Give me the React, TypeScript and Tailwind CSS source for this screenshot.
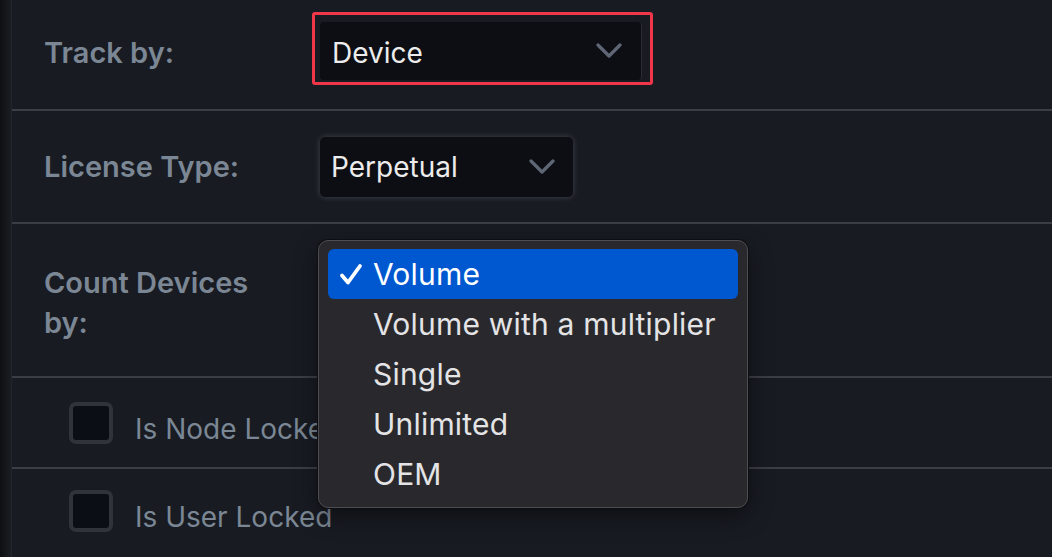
function Chevron() {
  return (
    <svg width="26" height="16" viewBox="0 0 26 16" fill="none">
      <path d="M2 2 L13 13 L24 2" stroke="#5f6776" strokeWidth="3.2" strokeLinecap="round" strokeLinejoin="round" />
    </svg>
  );
}

function Checkbox() {
  return <div className="w-[44px] h-[42px] rounded-[7px] border-[4px] border-[#30333a] bg-[#0c0e15] shrink-0" />;
}

const options = ["Volume", "Volume with a multiplier", "Single", "Unlimited", "OEM"];

export default function App() {
  return (
    <div
      className="relative w-[1052px] h-[557px] overflow-hidden flex bg-[#181b22]"
      style={{ fontFamily: "Inter, 'Liberation Sans', sans-serif" }}
    >
      <div className="w-[12px] bg-gradient-to-r from-[#0d0f12] to-[#1b1e23] border-r border-[#23262c]" />
      <div className="flex-1 flex flex-col">
        {/* Track by */}
        <div className="h-[111px] flex border-b-2 border-[#3b3e45]">
          <div className="w-[300px] pl-[32px] pb-[4px] flex items-center text-[29px] font-semibold text-[#7b8794]">Track by:</div>
          <div className="mt-[12px] self-start border-[3px] border-[#f0374a] rounded-[3px] pl-[5px] pr-[8px] pt-[7px] pb-[2px]">
            <div className="w-[322px] h-[58px] rounded-[4px] bg-[#0c0e14] border-r border-[#2a2c31] flex items-center justify-between pl-[12px] pr-[19px]">
              <span className="text-[28px] text-[#ececec] pt-[3px]">Device</span>
              <Chevron />
            </div>
          </div>
        </div>

        {/* License type */}
        <div className="h-[113px] flex items-center border-b-2 border-[#3b3e45]">
          <div className="w-[308px] pl-[32px] text-[29px] font-semibold text-[#7b8794]">License Type:</div>
          <div className="w-[253px] h-[60px] rounded-[5px] bg-[#0c0e14] shadow-[0_0_6px_rgba(255,255,255,0.18)] flex items-center justify-between pl-[11px] pr-[18px]">
            <span className="text-[28px] text-[#ececec]">Perpetual</span>
            <Chevron />
          </div>
        </div>

        {/* Count devices */}
        <div className="h-[154px] flex border-b-2 border-[#3b3e45]">
          <div className="w-[308px] pl-[32px] pt-[39px] text-[29px] leading-[40px] font-semibold text-[#7b8794]">
            Count Devices
            <br />
            by:
          </div>
        </div>

        {/* Node locked */}
        <div className="h-[91px] flex items-center gap-[22px] pl-[57px] border-b-2 border-[#3b3e45]">
          <Checkbox />
          <span className="text-[28px] text-[#7b8794] pt-[12px]">Is Node Locked</span>
        </div>

        {/* User locked */}
        <div className="flex-1 flex items-start gap-[22px] pl-[57px] pt-[21px]">
          <Checkbox />
          <span className="text-[28px] text-[#7b8794] pt-[6px]">Is User Locked</span>
        </div>
      </div>

      {/* dropdown menu */}
      <div className="absolute left-[318px] top-[240px] w-[430px] h-[268px] rounded-[10px] bg-[#29292d] border border-[#4d4d52] shadow-[0_0_0_1px_#0d0e11,0_8px_24px_rgba(0,0,0,0.45)] px-[9px] py-[8px]">
        {options.map((o, i) => (
          <div
            key={o}
            className={
              "relative h-[50px] rounded-[6px] flex items-center pl-[45px] text-[30px] tracking-[0.2px] " +
              (i === 0 ? "bg-[#0058d0] text-white" : "text-[#e4e4e6]")
            }
          >
            {i === 0 && (
              <svg className="absolute left-[11px] top-[14px]" width="24" height="23" viewBox="0 0 24 23" fill="none">
                <path d="M3 12.5 L9 19.5 L21 3" stroke="white" strokeWidth="3.8" strokeLinecap="round" strokeLinejoin="round" />
              </svg>
            )}
            {o}
          </div>
        ))}
      </div>
    </div>
  );
}
